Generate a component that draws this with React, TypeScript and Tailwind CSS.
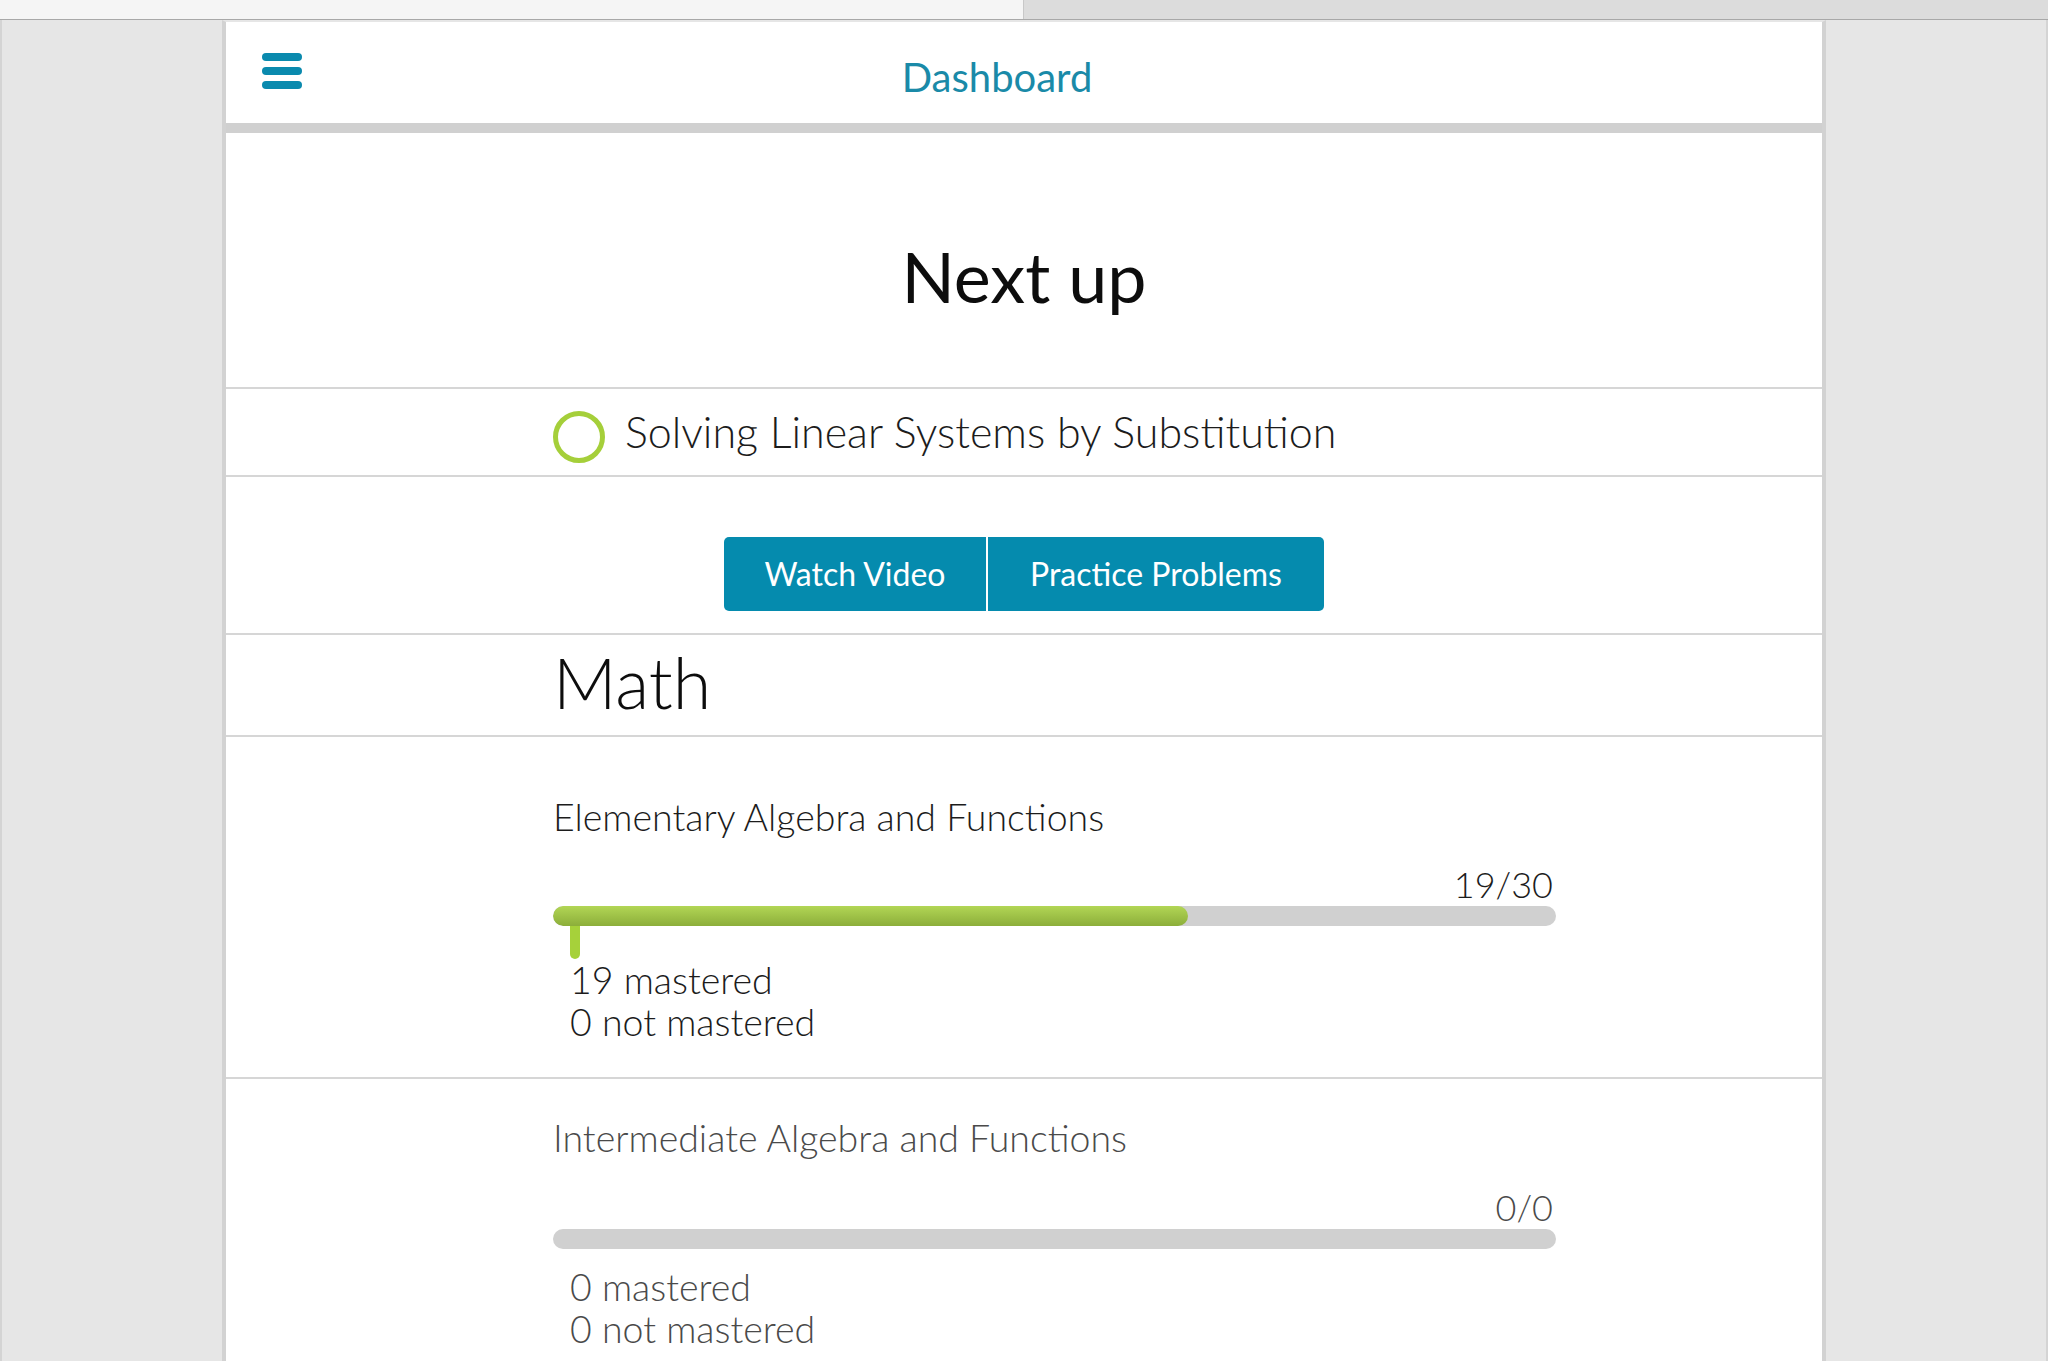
import React from 'react';

type Course = {
  title: string;
  mastered: number;
  notMastered: number;
  total: number;
  current?: boolean;
};

const courses: Course[] = [
  { title: 'Elementary Algebra and Functions', mastered: 19, notMastered: 0, total: 30, current: true },
  { title: 'Intermediate Algebra and Functions', mastered: 0, notMastered: 0, total: 0 },
];

function CourseProgress({ course }: { course: Course }) {
  const pct = course.total ? (course.mastered / course.total) * 100 : 0;
  const tone = course.current ? 'text-[#1c1c1c]' : 'text-[#4a4a4a]';

  return (
    <section
      className={
        course.current
          ? 'h-[342px] border-b-2 border-[#d6d6d6] pl-[327px] pr-[266px] pt-[57px]'
          : 'h-[342px] border-b-2 border-[#d6d6d6] pl-[327px] pr-[266px] pt-[36px]'
      }
    >
      <h3 className={`text-[37.5px] leading-[46px] font-light ${tone}`}>{course.title}</h3>
      <div
        className={
          course.current
            ? `mt-[22px] pr-[3px] text-right text-[36px] leading-[44px] font-light ${tone}`
            : `mt-[24px] pr-[3px] text-right text-[36px] leading-[44px] font-light ${tone}`
        }
      >
        {course.mastered}/{course.total}
      </div>
      <div className="h-[20px] w-full overflow-hidden rounded-full bg-[#d0d0d0]">
        {pct > 0 && (
          <div
            className="h-full rounded-full bg-gradient-to-b from-[#b2d655] to-[#8cae3a]"
            style={{ width: `${pct}%` }}
          />
        )}
      </div>
      {course.current ? (
        <div className="ml-[17px] h-[33px] w-[10px] rounded-b-full bg-[#a6d13a]" />
      ) : (
        <div className="h-[17px]" />
      )}
      <div className={`pl-[17px] text-[37.5px] leading-[41.5px] font-light ${tone}`}>
        <div>{course.mastered} mastered</div>
        <div>{course.notMastered} not mastered</div>
      </div>
    </section>
  );
}

export default function App() {
  return (
    <div className="h-[1361px] overflow-hidden bg-[#e6e6e6] font-[family-name:Lato,sans-serif] text-[#111]">
      {/* top strip */}
      <div className="flex h-[20px] border-b border-[#a8a8a8]">
        <div className="w-1/2 border-r border-[#c8c8c8] bg-[#f5f5f5]" />
        <div className="w-1/2 bg-[#dcdcdc]" />
      </div>

      <div className="flex h-full border-x-2 border-[#d4d4d4]">
        <div className="ml-[220px] w-[1604px] border-x-4 border-t-2 border-x-[#d2d2d2] border-t-[#e6e6e6] bg-white">
          {/* header */}
          <header className="flex h-[101px] items-start">
            <button className="ml-[36px] mt-[31px] flex w-[40px] flex-col gap-[6px]" aria-label="Menu">
              <span className="h-[8px] w-[40px] rounded-full bg-[#0a8aae]" />
              <span className="h-[8px] w-[40px] rounded-full bg-[#0a8aae]" />
              <span className="h-[8px] w-[40px] rounded-full bg-[#0a8aae]" />
            </button>
            <h1 className="mt-[31px] flex-1 pr-[130px] text-center text-[40px] leading-[48px] text-[#1a8aa8]">
              Dashboard
            </h1>
          </header>
          <div className="h-[10px] bg-[#d0d0d0]" />

          {/* next up */}
          <section className="h-[256px] border-b-2 border-[#d6d6d6] pt-[101px]">
            <h2 className="text-center text-[70px] leading-[84px] text-[#0d0d0d]">Next up</h2>
          </section>

          <section className="flex h-[88px] items-start border-b-2 border-[#d6d6d6] pl-[327px]">
            <span className="mt-[22px] h-[52px] w-[52px] rounded-full border-[5px] border-[#a5cf3a]" />
            <span className="ml-[20px] mt-[17px] text-[43px] leading-[52px] font-light text-[#1c1c1c]">
              Solving Linear Systems by Substitution
            </span>
          </section>

          <section className="flex h-[158px] justify-center gap-[2px] border-b-2 border-[#d6d6d6] pt-[60px]">
            <button className="h-[74px] w-[262px] rounded-l-[5px] bg-[#058bae] text-[32px] text-white">
              Watch Video
            </button>
            <button className="h-[74px] w-[336px] rounded-r-[5px] bg-[#058bae] text-[32px] text-white">
              Practice Problems
            </button>
          </section>

          <section className="h-[102px] border-b-2 border-[#d6d6d6] pl-[327px] pt-[5px]">
            <h2 className="text-[70px] leading-[84px] font-light text-[#0d0d0d]">Math</h2>
          </section>

          {courses.map((c) => (
            <CourseProgress key={c.title} course={c} />
          ))}
        </div>
      </div>
    </div>
  );
}
